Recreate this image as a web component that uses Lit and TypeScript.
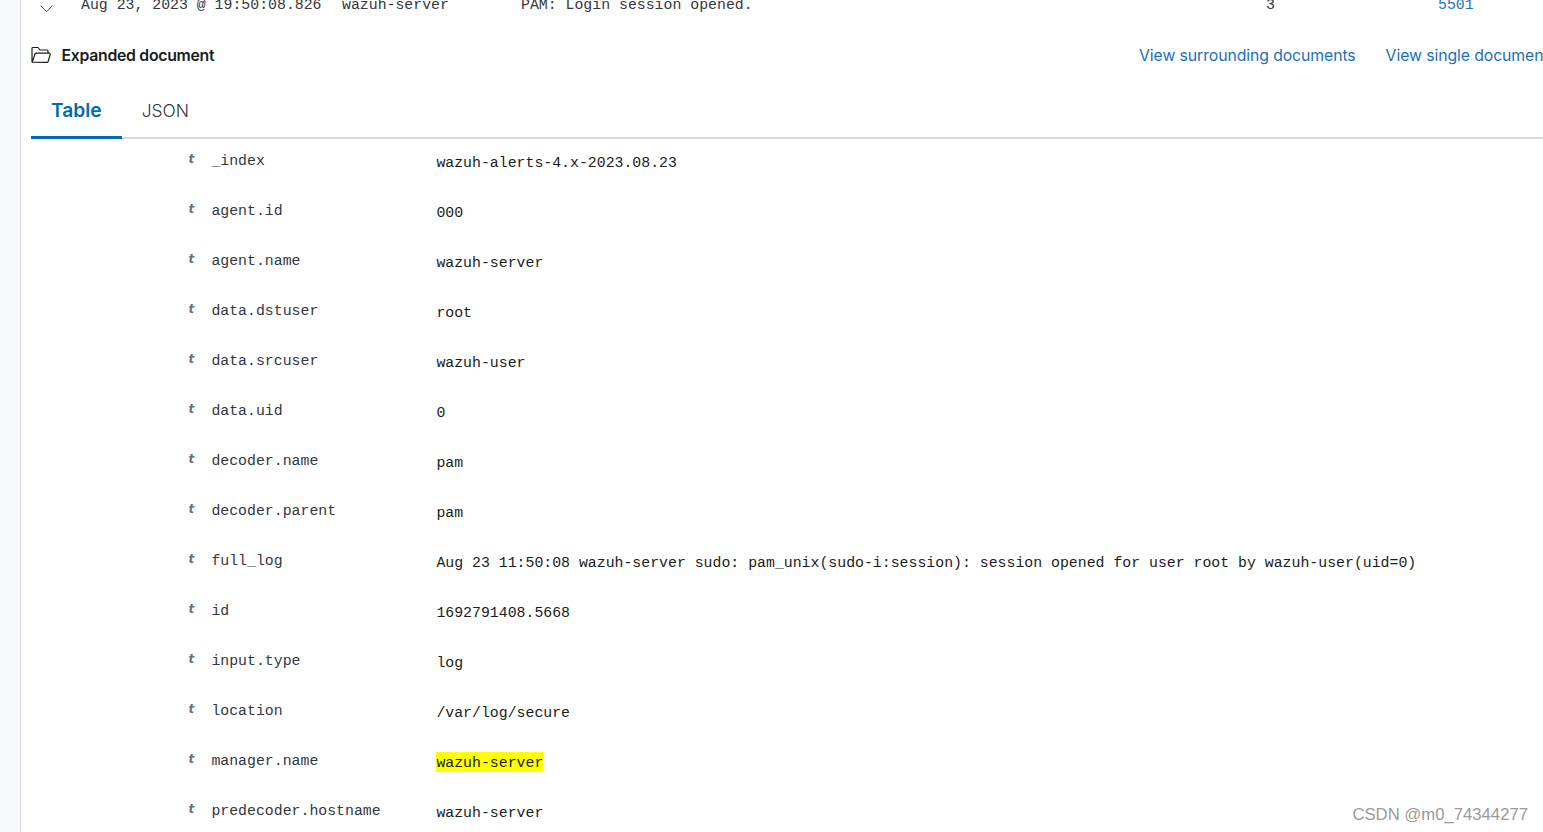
import { LitElement, html, css, svg } from "lit";
import { customElement } from "lit/decorators.js";

const rows: [string, string, boolean?][] = [
  ["_index", "wazuh-alerts-4.x-2023.08.23"],
  ["agent.id", "000"],
  ["agent.name", "wazuh-server"],
  ["data.dstuser", "root"],
  ["data.srcuser", "wazuh-user"],
  ["data.uid", "0"],
  ["decoder.name", "pam"],
  ["decoder.parent", "pam"],
  ["full_log", "Aug 23 11:50:08 wazuh-server sudo: pam_unix(sudo-i:session): session opened for user root by wazuh-user(uid=0)"],
  ["id", "1692791408.5668"],
  ["input.type", "log"],
  ["location", "/var/log/secure"],
  ["manager.name", "wazuh-server", true],
  ["predecoder.hostname", "wazuh-server"],
];

@customElement("app-root")
export class AppRoot extends LitElement {
  static styles = css`
    :host {
      display: flex;
      width: 1543px;
      height: 832px;
      overflow: hidden;
      background: #fff;
      color: #1a1c21;
      font-family: "Inter", "Liberation Sans", sans-serif;
      position: relative;
    }
    .rail {
      flex: 0 0 20px;
      background: #f7f9fc;
      border-right: 1px solid #d3dae6;
    }
    .main {
      flex: 1;
      min-width: 0;
      overflow: hidden;
    }
    .mono {
      font-family: "Liberation Mono", "DejaVu Sans Mono", monospace;
      font-size: 14.85px;
      white-space: pre;
    }
    .top {
      height: 13px;
      display: grid;
      grid-template-columns: 60px 261px 179px 745px 172px 1fr;
      align-items: end;
      color: #343741;
    }
    .top > span {
      line-height: 13px;
      display: block;
      transform: translateY(-1px);
    }
    .chev {
      display: flex;
      justify-content: center;
      box-sizing: border-box;
      width: 50px;
      align-self: start;
    }
    .chev svg { width: 13px; height: 8px; display: block; margin-top: 5px; }
    .blue { color: #1c6fbd; }
    .head {
      display: flex;
      align-items: center;
      height: 40px;
      margin: 22px 0 0 10px;
      white-space: nowrap;
    }
    .title {
      flex: 0 0 1108px;
      display: flex;
      align-items: center;
      gap: 10.5px;
      font-size: 15.8px;
      font-weight: 600;
      letter-spacing: -0.28px;
    }
    .title svg { width: 20px; height: 18px; display: block; }
    .links { display: flex; gap: 30px; font-size: 15.8px; color: #1c6fbd; letter-spacing: -0.09px; }
    .tabs {
      margin-left: 10px;
      display: flex;
      height: 64px;
      box-sizing: border-box;
      border-bottom: 2px solid #d3dae6;
    }
    .tab {
      padding: 9px 20px 0;
      display: flex;
      align-items: center;
      height: 64px;
      box-sizing: border-box;
      border-bottom: 3px solid transparent;
      color: #343741;
      font-weight: 300;
      font-size: 17.4px;
    }
    .tab.on {
      color: #006bb4;
      font-weight: 600;
      font-size: 19.2px;
      border-bottom-color: #006bb4;
    }
    .row {
      height: 50px;
      display: grid;
      grid-template-columns: 190.4px 225px 1fr;
      box-sizing: border-box;
    }
    .t {
      justify-self: end;
      width: 23px;
      font-family: "DejaVu Sans", sans-serif;
      font-style: italic;
      font-weight: 700;
      font-size: 12px;
      color: #6a717d;
      line-height: 16px;
      padding-top: 12px;
    }
    .k { color: #343741; line-height: 17px; padding-top: 14px; }
    .v { color: #1a1c21; line-height: 17px; padding-top: 16px; }
    mark {
      background: #ffff00;
      color: inherit;
      padding: 3px 0 1px;
    }
    .wm {
      position: absolute;
      right: 15px;
      bottom: 7px;
      font-family: "Liberation Sans", Arial, sans-serif;
      font-size: 16.7px;
      color: #9a9a9a;
    }
  `;

  render() {
    const folder = svg`<path d="M1 16 V2.5 a1 1 0 0 1 1-1 H7 l2 2.5 H16 a1 1 0 0 1 1 1 V7 M1.2 16.2 L4 8 a1 1 0 0 1 1-.8 H18.2 a1 1 0 0 1 1 1.2 L17.2 15.5 a1 1 0 0 1-1 .8 Z" fill="none" stroke="#1a1c21" stroke-width="1.2" stroke-linejoin="round"/>`;
    return html`
      <div class="rail"></div>
      <div class="main">
        <div class="top mono">
          <div class="chev">
            <svg viewBox="0 0 13 8"><path d="M.7 .7 L6.5 6.8 L12.3 .7" fill="none" stroke="#4a4f5a" stroke-width="1"/></svg>
          </div>
          <span>Aug 23, 2023 @ 19:50:08.826</span>
          <span>wazuh-server</span>
          <span>PAM: Login session opened.</span>
          <span>3</span>
          <span class="blue">5501</span>
        </div>
        <div class="head">
          <div class="title">
            <svg viewBox="0 0 20 18">${folder}</svg>
            <span>Expanded document</span>
          </div>
          <div class="links">
            <span>View surrounding documents</span>
            <span>View single document</span>
          </div>
        </div>
        <div class="tabs">
          <div class="tab on">Table</div>
          <div class="tab">JSON</div>
        </div>
        <div class="table">
          ${rows.map(
            ([k, v, hl]) => html`
              <div class="row mono">
                <span class="t">t</span>
                <span class="k">${k}</span>
                <span class="v">${hl ? html`<mark>${v}</mark>` : v}</span>
              </div>
            `
          )}
        </div>
      </div>
      <div class="wm">CSDN @m0_74344277</div>
    `;
  }
}
